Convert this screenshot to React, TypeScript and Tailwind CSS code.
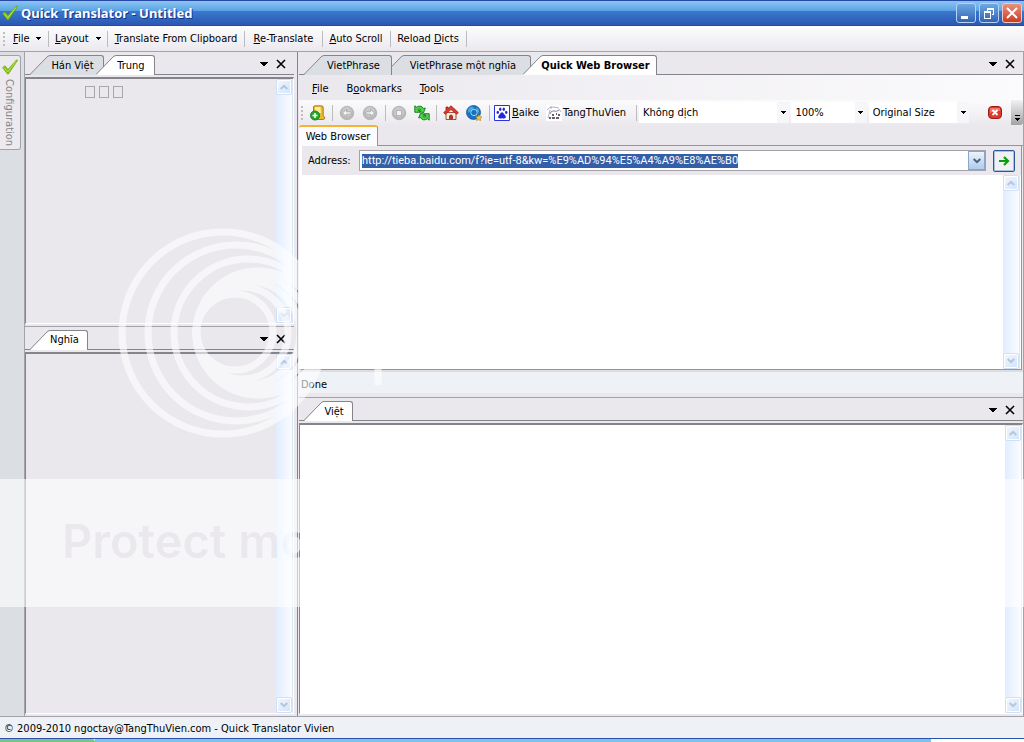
import { useEffect, useRef, type ReactNode } from 'react';

const ADDRESS = 'http://tieba.baidu.com/f?ie=utf-8&kw=%E9%AD%94%E5%A4%A9%E8%AE%B0';

function Caret({ className = '' }: { className?: string }) {
    return (
        <svg className={`w-[5px] h-[3px] shrink-0 ${className}`} viewBox="0 0 5 3" shapeRendering="crispEdges">
            <path d="M0 0H5V1H4V2H3V3H2V2H1V1H0Z" fill="#000" />
        </svg>
    );
}

function Separator({ className = '' }: { className?: string }) {
    return <span className={`w-px h-4 shrink-0 bg-[#bcbcbf] ${className}`} />;
}

function Grip() {
    return (
        <svg className="w-[2px] h-4 shrink-0" viewBox="0 0 2 16" shapeRendering="crispEdges" aria-hidden="true">
            <path d="M0 1h2v2H0zM0 5h2v2H0zM0 9h2v2H0zM0 13h2v2H0z" fill="#bfbfc3" />
        </svg>
    );
}

function Check({ className = '' }: { className?: string }) {
    return (
        <svg className={className} viewBox="0 0 16 16" aria-hidden="true">
            <path d="M.6 8.6 3 6.8 6 10.4 14.6.8 15.6 1.4 6.4 15H5.4Z" fill="#86c50e" stroke="#5f9a08" strokeWidth=".6" />
            <path d="M2 8.6 5.8 12.8 14 2.4" fill="none" stroke="#b9e64a" strokeWidth="1" />
        </svg>
    );
}

interface TabProps {
    label: string;
    className: string;
    active?: boolean;
}

function Tab({ label, className, active = false }: TabProps) {
    return (
        <button
            role="tab"
            aria-selected={active}
            className={`relative flex h-5 shrink-0 ${active ? 'z-20' : ''} ${className}`}
        >
            <svg className="w-5 h-5 shrink-0" viewBox="0 0 20 20" aria-hidden="true">
                <path d="M0 20 16 3Q18 .5 20 .5V20Z" fill={active ? '#fff' : '#dbdfe3'} />
                <path d="M0 19.5 16 3Q18 .5 20 .5" fill="none" stroke="#84848c" />
            </svg>
            <span
                className={`flex h-5 min-w-0 flex-1 items-center justify-center whitespace-nowrap border-t border-r border-[#84848c] rounded-tr-[3px] pr-2 ${active ? 'bg-white' : 'bg-[#dbdfe3]'}`}
            >
                {label}
            </span>
        </button>
    );
}

function TabStrip({ children, label }: { children: ReactNode; label: string }) {
    return (
        <div className="flex h-[23px] shrink-0 items-end border-b border-[#84848c] bg-[#eae8ed]">
            <div role="tablist" aria-label={label} className="-mb-px flex pl-[5px]">
                {children}
            </div>
            <div className="ml-auto flex h-full items-center gap-2 pt-[2px] pr-2">
                <button aria-label="Window list">
                    <svg className="w-2 h-1" viewBox="0 0 8 4" shapeRendering="crispEdges">
                        <path d="M0 0H8V1H7V2H6V3H5V4H3V3H2V2H1V1H0Z" fill="#000" />
                    </svg>
                </button>
                <button aria-label="Close">
                    <svg className="w-[10px] h-[10px]" viewBox="0 0 10 10">
                        <path d="M1 1 9 9M9 1 1 9" stroke="#000" strokeWidth="1.6" />
                    </svg>
                </button>
            </div>
        </div>
    );
}

function ScrollButton({ direction }: { direction: 'up' | 'down' }) {
    return (
        <button
            aria-label={`Scroll ${direction}`}
            className="flex h-4 w-4 items-center justify-center rounded-[2px] border border-[#cfe0f4] bg-linear-to-br from-[#f2f7fe] to-[#d3e3fa] shadow-[inset_0_0_0_1px_#fff]"
        >
            <svg className="w-2 h-[6px]" viewBox="0 0 8 6">
                <path
                    d={direction === 'up' ? 'M.7 5 4 1.8 7.3 5' : 'M.7 1 4 4.2 7.3 1'}
                    fill="none"
                    stroke="#b3c6dd"
                    strokeWidth="2"
                />
            </svg>
        </button>
    );
}

function ScrollBar() {
    return (
        <div className="flex w-[17px] shrink-0 flex-col justify-between border-r border-[#d8e6f6] bg-linear-to-r from-[#e0edff] to-[#fbfcff]">
            <ScrollButton direction="up" />
            <ScrollButton direction="down" />
        </div>
    );
}

function TextPane({ children, className }: { children?: ReactNode; className: string }) {
    return (
        <div className="flex min-h-0 flex-1 pt-[2px] pb-[2px]">
            <div
                className={`flex min-w-0 flex-1 border-t-2 border-r border-b border-l border-t-[#84848a] border-r-white border-b-white border-l-[#84848a] ${className}`}
            >
                <div className="min-w-0 flex-1">{children}</div>
                <ScrollBar />
            </div>
        </div>
    );
}

function TitleBar() {
    return (
        <header className="flex h-[26px] shrink-0 items-center border-t border-b border-t-[#2549a5] border-b-[#2549a5] bg-[linear-gradient(#8cc4f1,#67ade9_30%,#5ca2e3_40%,#3779cd_42%,#346fc6_60%,#2c56b2)] pl-[2px] pr-[2px]">
            <Check className="h-4 w-4 shrink-0" />
            <h1 className="ml-[3px] font-['Noto_Sans',sans-serif] text-[13px] leading-4 font-bold text-white [text-shadow:1px_1px_0_#17328a]">
                Quick Translator - Untitled
            </h1>
            <div className="ml-auto flex gap-[3px]">
                <button
                    aria-label="Minimize"
                    className="h-5 w-5 rounded-[3px] border border-[#b4d3f3] bg-linear-to-b from-[#6fa8e2] to-[#3363b4]"
                >
                    <svg viewBox="0 0 18 18" aria-hidden="true">
                        <path d="M4 12h7v3H4z" fill="#fff" />
                    </svg>
                </button>
                <button
                    aria-label="Restore"
                    className="h-5 w-5 rounded-[3px] border border-[#b4d3f3] bg-linear-to-b from-[#6fa8e2] to-[#3363b4]"
                >
                    <svg viewBox="0 0 18 18" shapeRendering="crispEdges" aria-hidden="true">
                        <path d="M7 4h7v7h-2v-1h1V6H8v1H7zM4 7h7v8H4zM5 9v5h5V9z" fill="#fff" fillRule="evenodd" />
                    </svg>
                </button>
                <button
                    aria-label="Close window"
                    className="h-5 w-5 rounded-[3px] border border-[#f0c8c4] bg-linear-to-b from-[#e8917c] to-[#c93a1c]"
                >
                    <svg viewBox="0 0 18 18" aria-hidden="true">
                        <path d="M4 4 14 14M14 4 4 14" stroke="#fff" strokeWidth="2" />
                    </svg>
                </button>
            </div>
        </header>
    );
}

function MainToolbar() {
    return (
        <nav className="flex h-[26px] shrink-0 items-center border-b border-[#a2a2a8] bg-linear-to-b from-[#fcfcfd] to-[#ebe9ee] pl-[3px]">
            <Grip />
            <button className="ml-2 flex w-7 items-center justify-between">
                <span><u>F</u>ile</span>
                <Caret />
            </button>
            <Separator className="ml-[7px] mr-[6px]" />
            <button className="flex w-[46px] items-center justify-between">
                <span><u>L</u>ayout</span>
                <Caret />
            </button>
            <Separator className="mx-[6px]" />
            <button className="w-[124px]"><u>T</u>ranslate From Clipboard</button>
            <Separator className="mx-[6px]" />
            <button className="w-[65px]"><u>R</u>e-Translate</button>
            <Separator className="mx-[6px]" />
            <button className="w-[54px]"><u>A</u>uto Scroll</button>
            <Separator className="ml-[7px] mr-[6px]" />
            <button className="w-[62px]">Reload <u>D</u>icts</button>
            <Separator className="mx-[7px]" />
        </nav>
    );
}

function ConfigurationBar() {
    return (
        <aside className="w-6 shrink-0 bg-[#dbdfe3] pt-[3px]">
            <button className="flex h-[95px] w-[21px] flex-col items-start rounded-r-[3px] border border-l-0 border-[#a2a2a8] bg-[#eceaee] pt-[3px] pl-[2px] text-[#85858a]">
                <Check className="h-4 w-4 shrink-0" />
                <span className="mt-1 leading-[14px] [writing-mode:vertical-rl]">Configuration</span>
            </button>
        </aside>
    );
}

function LeftColumn() {
    return (
        <div className="flex w-[270px] shrink-0 flex-col border-l border-[#a2a2a8]">
            <section className="flex min-h-0 flex-[274_1_0%] flex-col">
                <TabStrip label="Source">
                    <Tab label="Hán Việt" className="w-[74px]" />
                    <Tab label="Trung" className="-ml-2 w-[59px]" active />
                </TabStrip>
                <TextPane className="bg-[#eae8ed]">
                    <div className="flex gap-1 pt-[7px] pl-[59px]" aria-label="Untranslated text">
                        <span className="h-3 w-[10px] border border-[#a9a7ac]" />
                        <span className="h-3 w-[10px] border border-[#a9a7ac]" />
                        <span className="h-3 w-[10px] border border-[#a9a7ac]" />
                    </div>
                </TextPane>
            </section>
            <section className="flex min-h-0 flex-[390_1_0%] flex-col border-t border-[#a2a2a8]">
                <TabStrip label="Meaning">
                    <Tab label="Nghĩa" className="w-[58px]" active />
                </TabStrip>
                <TextPane className="bg-[#eae8ed]" />
            </section>
        </div>
    );
}

function ArrowDisc({ d }: { d: string }) {
    return (
        <svg className="h-4 w-4" viewBox="0 0 16 16" aria-hidden="true">
            <circle cx="8" cy="8" r="6.8" fill="#b9b9b9" stroke="#a6a6a6" strokeWidth=".6" />
            <circle cx="8" cy="7" r="5" fill="#c9c9c9" />
            <path d={d} fill="#f2f2f2" stroke="#989898" strokeWidth=".6" />
        </svg>
    );
}

interface ToolSelectProps {
    label: string;
    value: string;
    className: string;
}

function ToolSelect({ label, value, className }: ToolSelectProps) {
    return (
        <div className={`relative mr-[2px] h-[21px] ${className}`}>
            <select aria-label={label} className="h-full w-full appearance-none bg-white pl-1 pr-3 outline-none">
                <option>{value}</option>
            </select>
            <span className="pointer-events-none absolute inset-y-0 right-0 flex w-3 items-center justify-center bg-[#f6f5f7]">
                <Caret />
            </span>
        </div>
    );
}

function BrowserToolbar() {
    return (
        <div className="flex h-[25px] shrink-0 items-center bg-linear-to-b from-[#fbfbfc] to-[#ebe9ee] pl-[2px]">
            <Grip />
            <button aria-label="Add bookmark" className="ml-[7px]">
                <svg className="h-4 w-4" viewBox="0 0 16 16">
                    <path d="M3.5 3Q3 .8 5 .8H11.5Q13.5 .8 13.2 3V10.5L15 13Q14.5 14.8 12 14.5H5Q3 14 3.5 12Z" fill="#e8bb33" stroke="#94690d" strokeWidth=".8" />
                    <path d="M5 2H10.5L11 8H5Z" fill="#ffeb91" />
                    <circle cx="5" cy="10.5" r="4.6" fill="#25a72a" stroke="#0d6c14" strokeWidth=".7" />
                    <path d="M5 8V13M2.5 10.5H7.5" stroke="#fff" strokeWidth="1.6" />
                </svg>
            </button>
            <Separator className="mx-[6px]" />
            <button aria-label="Back">
                <ArrowDisc d="M3.5 8 7.5 4.5V6.8H12V9.2H7.5V11.5Z" />
            </button>
            <button aria-label="Forward" className="ml-[7px]">
                <ArrowDisc d="M12.5 8 8.5 4.5V6.8H4V9.2H8.5V11.5Z" />
            </button>
            <Separator className="ml-[7px] mr-[5px]" />
            <button aria-label="Stop">
                <ArrowDisc d="M5.5 5.5H10.5V10.5H5.5Z" />
            </button>
            <button aria-label="Refresh" className="ml-[7px]">
                <svg className="h-4 w-4" viewBox="0 0 16 16">
                    <path d="M.8 .8 2.5 2.2Q7 -.5 9.5 3.5L11.3 3 9.3 8.3 4.8 5.3 6.7 4.7Q5 3 4 4.8L6 7.3H.8Z" fill="#4fd04a" stroke="#0b7a16" strokeWidth=".9" />
                    <path d="M15.2 15.2 13.5 13.8Q9 16.5 6.5 12.5L4.7 13 6.7 7.7 11.2 10.7 9.3 11.3Q11 13 12 11.2L10 8.7H15.2Z" fill="#4fd04a" stroke="#0b7a16" strokeWidth=".9" />
                </svg>
            </button>
            <Separator className="mx-[6px]" />
            <button aria-label="Home">
                <svg className="h-4 w-4" viewBox="0 0 16 16">
                    <path d="M3 7.5H13V14.5H3Z" fill="#f7ecd9" stroke="#8b2b1d" strokeWidth=".8" />
                    <path d="M8 .8 15.3 7.5 13.8 9.3 8 4.5 2.2 9.3.7 7.5 3 5.4V2H5V3.5Z" fill="#e03b27" stroke="#8f160d" strokeWidth=".7" />
                    <path d="M6 14.5V11Q8 8 10 11V14.5Z" fill="#b53424" />
                </svg>
            </button>
            <button aria-label="Search the web" className="ml-[7px]">
                <svg className="h-4 w-4" viewBox="0 0 16 16">
                    <circle cx="7.5" cy="7.5" r="7" fill="#1673c4" stroke="#0d4f94" strokeWidth=".7" />
                    <path d="M3 3Q6 0 8 3L5 6 2 8Q1 5 3 3M10 2Q14 4 13 8L11 7Z" fill="#4aa6dc" />
                    <circle cx="8" cy="7.5" r="3.2" fill="#1c6fc0" stroke="#9ed3f2" strokeWidth="1" />
                    <path d="M13 9.5 14 11.5 16 12 14.5 13.5 14.5 15.8 12.8 14.7 10.5 15.5 11 13.2 9.7 11.7 12 11.5Z" fill="#f4c63e" stroke="#a47613" strokeWidth=".5" />
                </svg>
            </button>
            <Separator className="ml-[7px] mr-1" />
            <button className="flex w-[44px] items-center gap-[2px] whitespace-nowrap">
                <svg className="h-4 w-4 shrink-0" viewBox="0 0 16 16" aria-hidden="true">
                    <path d="M.5.5h15v15H.5z" fill="#fff" stroke="#2932e1" />
                    <g fill="#2529d8">
                        <ellipse cx="3.8" cy="7.3" rx="1.2" ry="1.6" />
                        <ellipse cx="6.2" cy="4.3" rx="1.2" ry="1.7" />
                        <ellipse cx="9.8" cy="4.3" rx="1.2" ry="1.7" />
                        <ellipse cx="12.2" cy="7.3" rx="1.2" ry="1.6" />
                        <path d="M8 7.3Q9.3 7.3 10 9 12.5 11 11.8 12.8 10.5 14 8 13.2 5.5 14 4.2 12.8 3.5 11 6 9 6.7 7.3 8 7.3Z" />
                    </g>
                </svg>
                <span><u>B</u>aike</span>
            </button>
            <button className="ml-2 flex w-[82px] items-center gap-px whitespace-nowrap">
                <svg className="h-4 w-4 shrink-0" viewBox="0 0 16 16" aria-hidden="true">
                    <path d="M0 0h16v16H0z" fill="#fff" />
                    <path d="M1 5Q3 2 7 2L13 3M5 1V4M4 5Q3 9 2 13M13 4 15 7" fill="none" stroke="#b3b1c9" />
                    <path d="M4 9Q5 5 8 6T13 5" fill="none" stroke="#85839e" />
                    <path d="M3 13h2M6 10h2M6 13h3M10 9h1M10 13h3M12 10h2" stroke="#3c2b35" strokeWidth="1.3" />
                </svg>
                <span>TangThuVien</span>
            </button>
            <Separator className="ml-2 mr-[2px]" />
            <ToolSelect label="Translation mode" value="Không dịch" className="min-w-0 flex-[150_1_0%]" />
            <ToolSelect label="Zoom" value="100%" className="min-w-0 flex-[75_1_0%]" />
            <ToolSelect label="Image size" value="Original Size" className="min-w-0 flex-[100_1_0%]" />
            <button aria-label="Close tab" className="ml-4">
                <svg className="h-4 w-4" viewBox="0 0 16 16">
                    <rect x="1.5" y="1.5" width="13" height="12" rx="3.5" fill="#dc3a2c" stroke="#9c1b12" />
                    <path d="M3 3H13V6Q8 5 3 8Z" fill="#ee7768" />
                    <path d="M5.5 5 10.5 10M10.5 5 5.5 10" stroke="#fff" strokeWidth="2" />
                </svg>
            </button>
            <button
                aria-label="Toolbar options"
                className="ml-2 flex h-full w-3 items-end justify-center rounded-r-[3px] bg-linear-to-b from-[#f1f0f2] to-[#a3a3a6] pb-1"
            >
                <svg className="h-[6px] w-[5px]" viewBox="0 0 5 6" shapeRendering="crispEdges">
                    <path d="M0 0H5V1H0ZM0 3H5V4H4V5H3V6H2V5H1V4H0Z" fill="#000" />
                </svg>
            </button>
        </div>
    );
}

function AddressBar() {
    const inputRef = useRef<HTMLInputElement>(null);

    // Opening the page selects the whole address
    useEffect(() => {
        inputRef.current?.focus();
        inputRef.current?.select();
    }, []);

    return (
        <form className="flex h-[29px] shrink-0 items-center bg-[#eae8ed] pl-[6px]" onSubmit={(e) => e.preventDefault()}>
            <label htmlFor="address" className="w-[51px] shrink-0">Address:</label>
            <div className="flex h-[21px] min-w-0 flex-1 border border-[#a2a2a8] bg-white">
                <input
                    id="address"
                    ref={inputRef}
                    defaultValue={ADDRESS}
                    className="min-w-0 flex-1 pl-[2px] font-['Roboto',sans-serif] outline-none selection:bg-[#335ea8] selection:text-white"
                />
                <button
                    type="button"
                    aria-label="Address history"
                    className="flex w-[17px] items-center justify-center border border-[#8ba7c8] bg-linear-to-b from-[#edf4fc] to-[#aecbed]"
                >
                    <svg className="h-[6px] w-2" viewBox="0 0 8 6">
                        <path d="M.7 1 4 4.2 7.3 1" fill="none" stroke="#4c617a" strokeWidth="2" />
                    </svg>
                </button>
            </div>
            <button
                aria-label="Go"
                className="ml-[7px] mr-[6px] flex h-[22px] w-[22px] items-center justify-center rounded-[2px] border border-[#2d5796] bg-[#f1f0f2] shadow-[inset_0_0_0_1px_#a9c0e0]"
            >
                <svg className="h-3 w-3" viewBox="0 0 12 12">
                    <path d="M1 6H10M6 2 10 6 6 10" fill="none" stroke="#08a008" strokeWidth="2.2" />
                </svg>
            </button>
        </form>
    );
}

function BrowserPanel() {
    return (
        <section className="flex min-h-0 flex-[346_1_0%] flex-col">
            <TabStrip label="Documents">
                <Tab label="VietPhrase" className="z-10 w-[88px]" />
                <Tab label="VietPhrase một nghĩa" className="-ml-2 w-[147px]" />
                <div className="flex font-bold">
                    <Tab label="Quick Web Browser" className="-ml-2 w-[134px]" active />
                </div>
            </TabStrip>
            <nav className="flex h-[25px] shrink-0 items-center gap-[18px] bg-linear-to-r from-[#eae8ed] to-[#fbfafc] pt-[2px] pl-[13px]">
                <button><u>F</u>ile</button>
                <button>B<u>o</u>okmarks</button>
                <button><u>T</u>ools</button>
            </nav>
            <BrowserToolbar />
            <div className="flex h-[21px] shrink-0 items-end border-b border-[#8398b4] bg-[#eae8ed]">
                <button className="-mb-px h-[21px] w-[79px] rounded-t-[3px] border-t-2 border-r border-t-[#f5b333] border-r-[#8398b4] bg-[#fcfcfe]">
                    Web Browser
                </button>
            </div>
            <div className="mr-px flex min-h-0 flex-1 flex-col border-r border-b border-[#8398b4] bg-white pl-[3px]">
                <AddressBar />
                <div className="flex min-h-0 flex-1 justify-end pr-px">
                    <ScrollBar />
                </div>
            </div>
            <div className="mb-1 flex h-[23px] shrink-0 items-center border-t-2 border-[#dddde1] bg-[#eef2f7] pt-[5px] pl-[2px]">
                Done
            </div>
        </section>
    );
}

function Watermark() {
    return (
        <div className="pointer-events-none absolute inset-0 z-30 overflow-hidden" aria-hidden="true">
            <svg className="absolute top-[226px] left-[117px] h-[214px] w-[270px]" viewBox="117 226 270 214">
                <g fill="none" stroke="#fff" opacity=".6">
                    <circle cx="223" cy="333" r="101" strokeWidth="7" />
                    <circle cx="236" cy="333" r="88" strokeWidth="7" />
                    <circle cx="248" cy="333" r="74" strokeWidth="7" />
                    <circle cx="258" cy="333" r="62" strokeWidth="7" />
                    <circle cx="253" cy="333" r="57" strokeWidth="7" />
                    <circle cx="248" cy="333" r="52" strokeWidth="7" />
                    <circle cx="242" cy="333" r="46" strokeWidth="7" />
                    <circle cx="235" cy="332" r="38" strokeWidth="7" />
                    <path d="M378 368V385" strokeWidth="7" />
                </g>
            </svg>
            {/* Band with the lettering punched out of it */}
            <svg className="absolute top-[479px] left-0 h-32 w-full">
                <mask id="lettering">
                    <rect width="100%" height="100%" fill="#fff" />
                    <text x="62" y="79" className="fill-black font-['Inter',sans-serif] text-[47px] font-semibold">
                        Protect mo
                    </text>
                </mask>
                <rect width="100%" height="100%" fill="#fff" opacity=".6" mask="url(#lettering)" />
            </svg>
        </div>
    );
}

export default function App() {
    return (
        <div className="relative flex h-screen flex-col overflow-hidden bg-[#eae8ed] font-['DejaVu_Sans_Condensed','DejaVu_Sans',sans-serif] text-[11px] leading-[14px] whitespace-nowrap text-black">
            <TitleBar />
            <MainToolbar />
            <main className="flex min-h-0 flex-1 border-b border-[#a2a2a8]">
                <ConfigurationBar />
                <LeftColumn />
                <div className="w-[3px] shrink-0" />
                <div className="flex min-w-0 flex-1 flex-col border-x border-l-[#84848a] border-r-[#a2a2a8] pl-px">
                    <BrowserPanel />
                    <section className="flex min-h-0 flex-[318_1_0%] flex-col border-t border-[#a2a2a8]">
                        <TabStrip label="Result">
                            <Tab label="Việt" className="w-[49px]" active />
                        </TabStrip>
                        <TextPane className="bg-white" />
                    </section>
                </div>
            </main>
            <footer className="flex h-[21px] shrink-0 items-center bg-[#eef2f7] pt-[2px] pl-1">
                © 2009-2010 ngoctay@TangThuVien.com - Quick Translator Vivien
            </footer>
            <div className="flex h-1 shrink-0 border-t border-[#2a52ad] bg-white">
                <div className="w-[95px] rounded-tr-[3px] bg-[#7fc384]" />
                <div className="w-[836px] bg-[#80c0ee]" />
            </div>
            <Watermark />
        </div>
    );
}
